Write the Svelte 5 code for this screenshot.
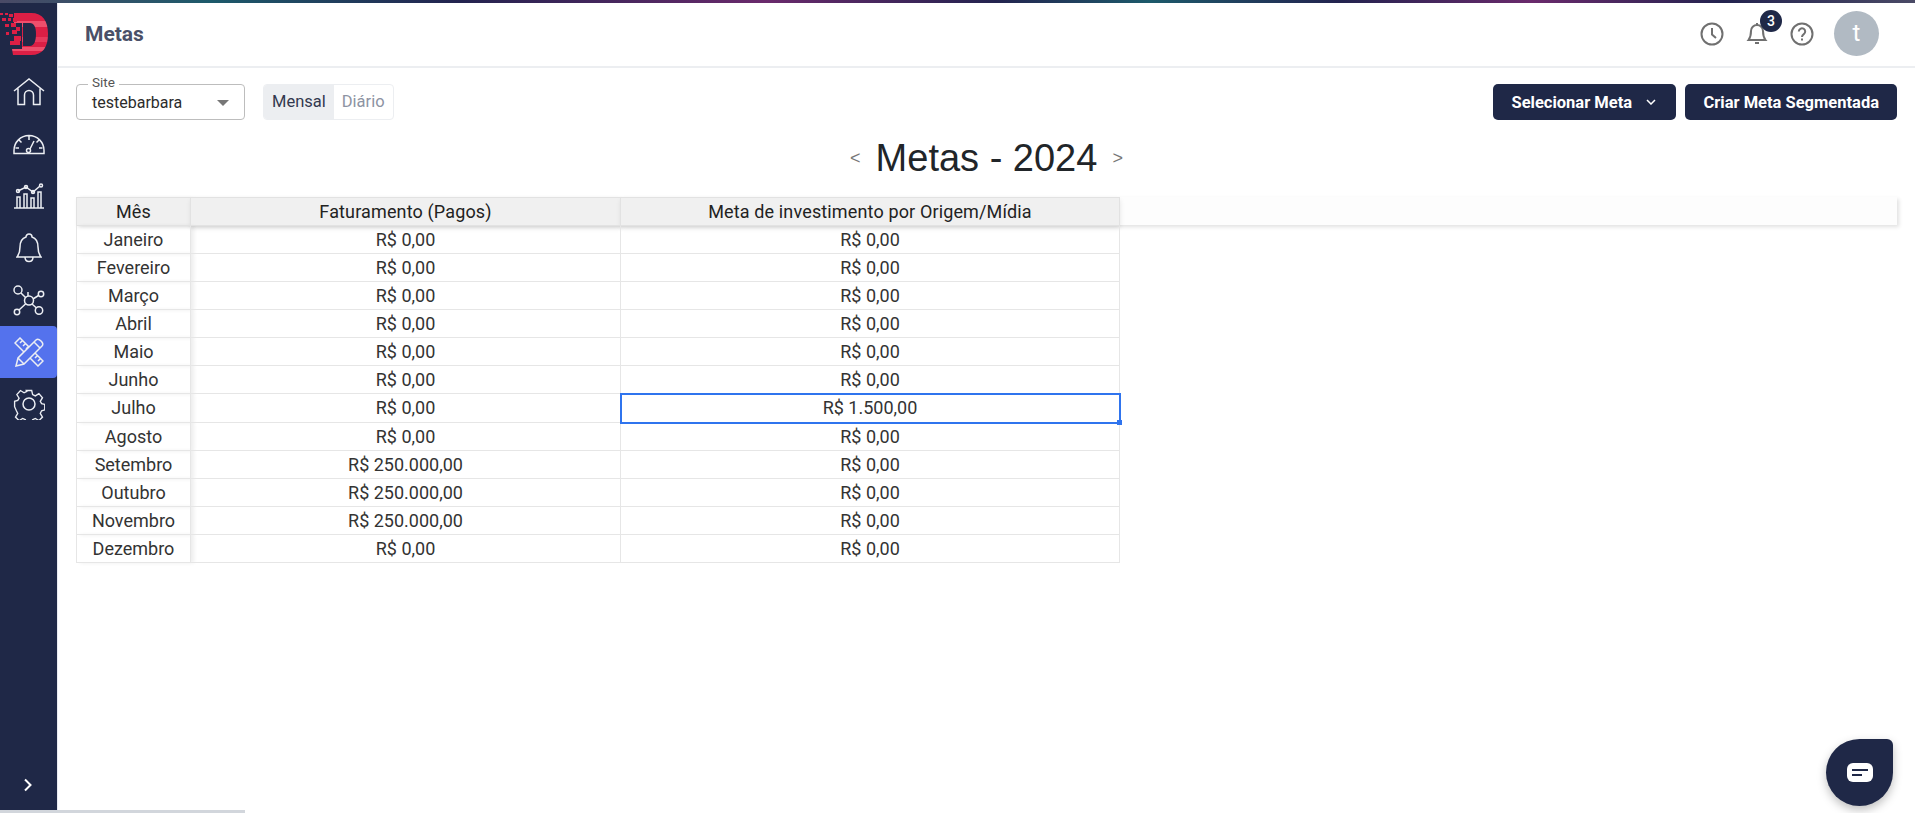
<script>
  const months = [
    ['Janeiro', 'R$ 0,00', 'R$ 0,00'],
    ['Fevereiro', 'R$ 0,00', 'R$ 0,00'],
    ['Março', 'R$ 0,00', 'R$ 0,00'],
    ['Abril', 'R$ 0,00', 'R$ 0,00'],
    ['Maio', 'R$ 0,00', 'R$ 0,00'],
    ['Junho', 'R$ 0,00', 'R$ 0,00'],
    ['Julho', 'R$ 0,00', 'R$ 1.500,00'],
    ['Agosto', 'R$ 0,00', 'R$ 0,00'],
    ['Setembro', 'R$ 250.000,00', 'R$ 0,00'],
    ['Outubro', 'R$ 250.000,00', 'R$ 0,00'],
    ['Novembro', 'R$ 250.000,00', 'R$ 0,00'],
    ['Dezembro', 'R$ 0,00', 'R$ 0,00']
  ];
</script>

<div class="topline"></div>
<div class="shell">
  <aside class="sidebar">
    <div class="logo">
      <svg width="50" height="56" viewBox="0 0 50 56">
        <defs>
          <linearGradient id="stripes" x1="0" y1="0" x2="0" y2="1">
            <stop offset="0" stop-color="#dc1f45" />
            <stop offset=".2" stop-color="#dc1f45" />
            <stop offset=".2" stop-color="#ee4f6c" />
            <stop offset=".33" stop-color="#ee4f6c" />
            <stop offset=".33" stop-color="#dc1f45" />
            <stop offset=".58" stop-color="#dc1f45" />
            <stop offset=".58" stop-color="#e8395c" />
            <stop offset=".68" stop-color="#e8395c" />
            <stop offset=".68" stop-color="#dc1f45" />
            <stop offset=".8" stop-color="#dc1f45" />
            <stop offset=".8" stop-color="#ee4f6c" />
            <stop offset=".9" stop-color="#ee4f6c" />
            <stop offset=".9" stop-color="#dc1f45" />
          </linearGradient>
        </defs>
        <path fill-rule="evenodd" d="M14 10H31C43 10 48 18 48 31S43 52 31 52H13L12 46H22V20H14ZM23 20V43H30C34 43 36 38 36 31S34 20 30 20Z" fill="url(#stripes)" />
        <g fill="#dc1f45">
          <rect x="0" y="10" width="3" height="2" /><rect x="5" y="10" width="3" height="2" /><rect x="9" y="11" width="4" height="3" />
          <rect x="2" y="15" width="4" height="3" /><rect x="8" y="15" width="3" height="3" /><rect x="13" y="15" width="4" height="4" />
          <rect x="5" y="21" width="4" height="3" /><rect x="11" y="20" width="5" height="4" /><rect x="16" y="24" width="4" height="4" />
          <rect x="6" y="29" width="3" height="3" /><rect x="12" y="27" width="5" height="4" /><rect x="14" y="33" width="7" height="5" />
          <rect x="10" y="38" width="10" height="4" />
        </g>
      </svg>
    </div>
    <nav class="menu">
      <div class="item">
        <svg width="32" height="28" viewBox="0 0 32 28" class="ico">
          <path d="M1 13 16 1l15 12M5 10.500V26.500h6.500V17a4.500 4.500 0 0 1 9 0v9.500H27V10.500" />
        </svg>
      </div>
      <div class="item">
        <svg width="32" height="22" viewBox="0 0 32 22" class="ico">
          <path d="M1 20.500v-3a15 15 0 0 1 30 0v3zM16 3v4M6 7l2.500 2.500M26 7l-2.500 2.500M2.500 15h3.500M26 15h3.500M21 8l-4 8" />
          <circle cx="15.500" cy="17.500" r="2" />
        </svg>
      </div>
      <div class="item">
        <svg width="32" height="26" viewBox="0 0 32 26" class="ico">
          <path d="M1 25h30M4 25V14h3v11M11 25V11h3v14M18 25V15h3v10M25 25V9h3v16" />
          <path d="M5 8l8-4 7 5 7-6" />
          <circle cx="5" cy="8" r="1.500" /><circle cx="13" cy="4" r="1.500" /><circle cx="20" cy="9" r="1.500" /><circle cx="28" cy="2.500" r="1.500" />
        </svg>
      </div>
      <div class="item">
        <svg width="26" height="30" viewBox="0 0 26 30" class="ico">
          <path d="M13 1a3 3 0 0 1 3 3c4.500 1.500 6 5.500 6 10 0 4.500 1 7.500 3 10H1c2-2.500 3-5.500 3-10 0-4.500 1.500-8.500 6-10a3 3 0 0 1 3-3zM9 24c0 6 8 6 8 0" />
        </svg>
      </div>
      <div class="item">
        <svg width="32" height="31" viewBox="0 0 32 31" class="ico">
          <circle cx="16" cy="15.500" r="4.500" /><circle cx="5" cy="5" r="4" /><circle cx="28" cy="9" r="2.700" /><circle cx="4" cy="27" r="2.700" /><circle cx="26" cy="25.500" r="3.700" />
          <path d="M8 8l5 5M20 14l5.500-3.500M6 25l7-6.500M19 19l4.500 4M15 7v4" />
        </svg>
      </div>
      <div class="item active">
        <svg width="30" height="30" viewBox="0 0 30 30" class="ico">
          <path d="M1 6l5-5 23 23-5 5zM6 6l2-2M9 9l2-2M12 12l2-2M18 18l2-2M21 21l2-2M24 24l2-2" />
          <path d="M2 29l2-8L22 3c2-2 4.500 .5 5 1s3 3 1 5L10 27zM4 21l6 6M20 5l6 6" fill="#5472ed" />
        </svg>
      </div>
      <div class="item">
        <svg width="32" height="32" viewBox="0 0 32 32" class="ico">
          <circle cx="16" cy="16" r="6" />
          <path d="M13 1h6l1 4.500 3 1.500 4-2.500 4 4.500-2.500 4 1.500 2.500 3.500 1v6l-3.500 1-1.500 3 2.500 4-4 4-4-2.500-3 1.500-1 4.500h-6l-1-4.500-3-1.500-4 2.500-4-4 2.500-4-1.500-3L0 19v-6l3.500-1L5 9.500l-2.500-4 4-4.500 4 2.500 3-1.500z" transform="translate(1.600 1.600) scale(.9)" />
        </svg>
      </div>
    </nav>
    <div class="expand">
      <svg width="10" height="14" viewBox="0 0 10 14"><path d="M2 1.500 7.500 7 2 12.500" fill="none" stroke="#fff" stroke-width="2" /></svg>
    </div>
  </aside>

  <div class="main">
    <header class="header">
      <h1>Metas</h1>
      <div class="actions">
        <svg width="24" height="24" viewBox="0 0 24 24" class="hico"><circle cx="12" cy="12" r="10.500" /><path d="M12 6v6.500l4 3.500" /></svg>
        <div class="bell">
          <svg width="24" height="24" viewBox="0 0 24 24" class="hico"><path d="M12 3a6 6 0 0 1 6 6c0 5 1 7 2.500 9h-17C5 16 6 14 6 9a6 6 0 0 1 6-6zM12 1v2M10 21h4" /></svg>
          <span class="count">3</span>
        </div>
        <svg width="24" height="24" viewBox="0 0 24 24" class="hico"><circle cx="12" cy="12" r="10.500" /><path d="M8.800 9.500a3.200 3.200 0 1 1 5 2.700c-1.200.8-1.800 1.300-1.800 2.800M12 16.500v2" /></svg>
        <div class="avatar">t</div>
      </div>
    </header>

    <section class="content">
      <div class="toolbar">
        <div class="filters">
          <div class="select">
            <span class="legend">Site</span>
            <span>testebarbara</span>
            <i class="caret"></i>
          </div>
          <div class="toggle">
            <span class="on">Mensal</span>
            <span class="off">Diário</span>
          </div>
        </div>
        <div class="buttons">
          <button class="btn wide">Selecionar Meta
            <svg width="10" height="6" viewBox="0 0 10 6"><path d="M1 1l4 4 4-4" fill="none" stroke="#fff" stroke-width="1.500" /></svg>
          </button>
          <button class="btn">Criar Meta Segmentada</button>
        </div>
      </div>

      <div class="title">
        <span class="arrow">&lt;</span>
        <h2>Metas - 2024</h2>
        <span class="arrow">&gt;</span>
      </div>

      <div class="sheet">
        <div class="strip"></div>
        <table>
          <thead>
            <tr>
              <th class="c1">Mês</th>
              <th class="c2">Faturamento (Pagos)</th>
              <th class="c3">Meta de investimento por Origem/Mídia</th>
            </tr>
          </thead>
          <tbody>
            {#each months as row}
              <tr>
                <td class="c1">{row[0]}</td>
                <td class="c2">{row[1]}</td>
                <td class="c3" class:selected={row[2] !== 'R$ 0,00'}>{row[2]}</td>
              </tr>
            {/each}
          </tbody>
        </table>
      </div>
    </section>
  </div>
</div>

<div class="scrollbar"></div>
<div class="chat">
  <svg width="26" height="19" viewBox="0 0 26 19">
    <rect width="26" height="19" rx="6" fill="#fff" />
    <path d="M5 6h16v2H5zM5 11h10v2H5z" fill="#1f2847" />
  </svg>
</div>

<style>
  :global(body) {
    margin: 0;
    background: #fff;
    font-family: Roboto, "Liberation Sans", sans-serif;
    overflow: hidden;
  }

  .topline {
    height: 3px;
    background: linear-gradient(90deg, #4a4a66, #1d5a6b 11%, #23234f 24%, #6a2a6c 40%, #23234f 52%, #1d5a6b 60%, #23234f 70%, #6a2a6c 80%, #23234f 90%, #4a4a66);
  }

  .shell {
    display: flex;
    height: 807px;
  }

  .sidebar {
    width: 58px;
    flex: none;
    background: #1f2847;
    border-right: 1px solid #e8eaf0;
    box-sizing: border-box;
    display: flex;
    flex-direction: column;
  }

  .logo {
    height: 63px;
  }

  .menu {
    display: flex;
    flex-direction: column;
  }

  .item {
    height: 52px;
    display: flex;
    align-items: center;
    justify-content: center;
  }

  .item.active {
    background: #5472ed;
    border-radius: 0 4px 4px 0;
  }

  .ico {
    fill: none;
    stroke: #eceef3;
    stroke-width: 1.500;
  }

  .expand {
    margin-top: auto;
    height: 36px;
    padding: 0 2px 7px 0;
    display: flex;
    align-items: center;
    justify-content: center;
  }

  .main {
    flex: 1;
    min-width: 0;
  }

  .header {
    height: 65px;
    box-sizing: border-box;
    border-bottom: 2px solid #eceef1;
    padding: 0 36px 2px 27px;
    display: flex;
    align-items: center;
    justify-content: space-between;
  }

  h1 {
    margin: 0;
    font-size: 21px;
    font-weight: 700;
    color: #4a5068;
  }

  .actions {
    display: flex;
    align-items: center;
    gap: 21px;
  }

  .hico {
    display: block;
    fill: none;
    stroke: #707070;
    stroke-width: 2;
  }

  .bell {
    position: relative;
    width: 24px;
  }

  .count {
    position: absolute;
    top: -12px;
    left: 15px;
    width: 22px;
    height: 22px;
    border-radius: 50%;
    background: #1f2847;
    color: #fff;
    font-size: 14px;
    font-weight: 500;
    line-height: 22px;
    text-align: center;
  }

  .avatar {
    width: 45px;
    height: 45px;
    margin-left: -1px;
    border-radius: 50%;
    background: #b1bac3;
    color: #fff;
    font-size: 24px;
    line-height: 45px;
    text-align: center;
  }

  .content {
    padding: 16px 18px 0 18px;
  }

  .toolbar {
    display: flex;
    justify-content: space-between;
  }

  .filters {
    display: flex;
    gap: 18px;
  }

  .select {
    position: relative;
    width: 169px;
    height: 36px;
    box-sizing: border-box;
    border: 1px solid #bdbdbd;
    border-radius: 4px;
    padding: 0 15px;
    display: flex;
    align-items: center;
    font-size: 16px;
    color: #2b2b2b;
  }

  .legend {
    position: absolute;
    top: -10px;
    left: 11px;
    padding: 0 4px;
    background: #fff;
    font-size: 13.500px;
    line-height: 15px;
    color: #555;
  }

  .caret {
    position: absolute;
    right: 15px;
    top: 15px;
    border: 6px solid transparent;
    border-top-color: #777;
    border-bottom: 0;
  }

  .toggle {
    height: 36px;
    box-sizing: border-box;
    border: 1px solid #eceef1;
    border-radius: 4px;
    display: flex;
    font-size: 16.500px;
    line-height: 34px;
    overflow: hidden;
  }

  .toggle span {
    padding: 0 8px;
  }

  .toggle .on {
    background: #eceef1;
    color: #33394f;
  }

  .toggle .off {
    color: #8d93a3;
  }

  .buttons {
    display: flex;
    gap: 9px;
  }

  .btn {
    height: 36px;
    box-sizing: border-box;
    padding: 0 18px;
    border: 0;
    border-radius: 5px;
    background: #1f2847;
    color: #fff;
    font-family: inherit;
    font-size: 16.500px;
    font-weight: 700;
    display: flex;
    align-items: center;
    gap: 15px;
  }

  .btn.wide {
    width: 183px;
    gap: 14px;
    white-space: nowrap;
  }

  .title {
    display: flex;
    justify-content: center;
    align-items: center;
    gap: 15px;
    height: 40px;
    margin-top: 18px;
  }

  h2 {
    margin: 0;
    font-family: "Liberation Sans", Arial, sans-serif;
    font-size: 38px;
    font-weight: 400;
    color: #212529;
  }

  .arrow {
    font-family: "Liberation Sans", Arial, sans-serif;
    font-size: 18px;
    color: #777;
  }

  .sheet {
    position: relative;
    margin-top: 19px;
  }

  .strip {
    position: absolute;
    top: 0;
    left: 0;
    right: 0;
    height: 28px;
    background: #fdfdfd;
    box-shadow: 2px 2px 4px rgba(0, 0, 0, .12);
  }

  table {
    position: relative;
    border-collapse: collapse;
    table-layout: fixed;
    width: 1044px;
    font-size: 18px;
    color: #333;
  }

  th {
    height: 27px;
    padding: 0;
    font-weight: 400;
    letter-spacing: .14px;
    color: #222;
    background: #f0f0f0;
    border: 1px solid #e2e2e2;
    box-shadow: 0 2px 5px rgba(0, 0, 0, .1);
  }

  td {
    height: 26px;
    padding: 0 0 1px;
    text-align: center;
    border: 1px solid #e6e6e6;
  }

  .c1 {
    width: 113px;
    box-shadow: 3px 0 4px rgba(0, 0, 0, .07);
  }

  .c2 {
    width: 429px;
  }

  td.selected {
    height: 27px;
    position: relative;
    outline: 2px solid #2f74ee;
    outline-offset: -1px;
  }

  td.selected::after {
    content: "";
    position: absolute;
    right: -3px;
    bottom: -3px;
    width: 5px;
    height: 5px;
    background: #2f74ee;
  }

  .scrollbar {
    height: 3px;
    width: 245px;
    background: #d2d6dc;
  }

  .chat {
    position: fixed;
    right: 22px;
    bottom: 7px;
    width: 67px;
    height: 67px;
    border-radius: 50% 6px 50% 50%;
    background: #1f2847;
    box-shadow: 0 4px 10px rgba(0, 0, 0, .25);
    display: flex;
    align-items: center;
    justify-content: center;
  }
</style>
